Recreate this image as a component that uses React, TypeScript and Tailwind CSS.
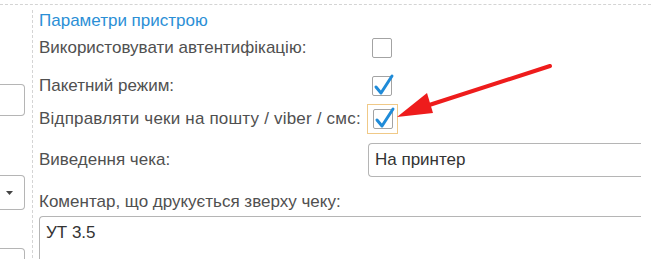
import React from "react"

function Check({ checked }: { checked?: boolean }) {
  return (
    <div className="relative h-[20px] w-[20px] rounded-[2px] border border-[#a3a3a3] bg-white">
      {checked && (
        <svg className="absolute -left-[1px] -top-[5px]" width="24" height="26" viewBox="0 0 24 26">
          <path d="M4 15 L9 21 L20 4" fill="none" stroke="#1f8bd8" strokeWidth="3" strokeLinecap="round" strokeLinejoin="round" />
        </svg>
      )}
    </div>
  )
}

export default function App() {
  return (
    <div className="relative h-[276px] w-[651px] overflow-hidden bg-white font-['Liberation_Sans',Arial,sans-serif] text-[17px] text-[#505050]">
      <div className="h-[259px] overflow-hidden">
        {/* top dashed line */}
        <div className="mt-[4px] border-t border-dashed border-[#d4d4d4]" />

        <div className="flex">
          {/* left clipped column */}
          <div className="w-[32px] shrink-0">
            <div className="mt-[79px] h-[32px] w-[25px] rounded-r-[4px] border border-l-0 border-[#b5b5b5]" />
            <div className="mt-[59px] flex h-[35px] w-[25px] items-center justify-end rounded-r-[4px] border border-l-0 border-[#b5b5b5] pr-[11px]">
              <svg width="7" height="4" viewBox="0 0 7 4">
                <path d="M0 0 L7 0 L3.5 4 Z" fill="#444" />
              </svg>
            </div>
            <div className="mt-[38px] h-[30px] w-[25px] rounded-r-[4px] border border-l-0 border-[#b5b5b5]" />
          </div>

          {/* main settings group */}
          <div className="mt-[5px] flex-1 border-l border-dashed border-[#d4d4d4] pl-[6px] pr-[10px]">
            <div className="flex h-[22px] items-center text-[#2b8fd6]">Параметри пристрою</div>

            <div className="flex h-[32px] items-center">
              <div className="w-[333px]">Використовувати автентифікацію:</div>
              <Check />
            </div>

            <div className="mt-[6px] flex h-[32px] items-center">
              <div className="w-[333px]">Пакетний режим:</div>
              <Check checked />
            </div>

            <div className="mt-[1px] flex h-[32px] items-center">
              <div className="w-[328px] whitespace-nowrap tracking-[0.2px]">Відправляти чеки на пошту / viber / смс:</div>
              <div className="flex h-[30px] w-[31px] items-center justify-center border border-[#f0c987]">
                <Check checked />
              </div>
            </div>

            <div className="mt-[8px] flex h-[34px] items-center">
              <div className="w-[329px]">Виведення чека:</div>
              <div className="flex h-[34px] flex-1 items-center rounded-l-[4px] border border-r-0 border-[#b5b5b5] pl-[6px] text-[#333]">
                На принтер
              </div>
            </div>

            <div className="mt-[13px] flex h-[24px] items-center">Коментар, що друкується зверху чеку:</div>

            <div className="mt-[2px] h-[60px] rounded-tl-[4px] border border-r-0 border-[#b5b5b5] pl-[6px] pt-[3px] text-[#333]">
              УТ 3.5
            </div>
          </div>
        </div>
      </div>

      {/* red annotation arrow */}
      <svg className="absolute left-0 top-0" width="651" height="276" viewBox="0 0 651 276">
        <path d="M550 66 L420 108" stroke="#ee1c1c" strokeWidth="4" strokeLinecap="round" />
        <path d="M397 117 L427 93 L433 113 Z" fill="#ee1c1c" />
      </svg>
    </div>
  )
}
